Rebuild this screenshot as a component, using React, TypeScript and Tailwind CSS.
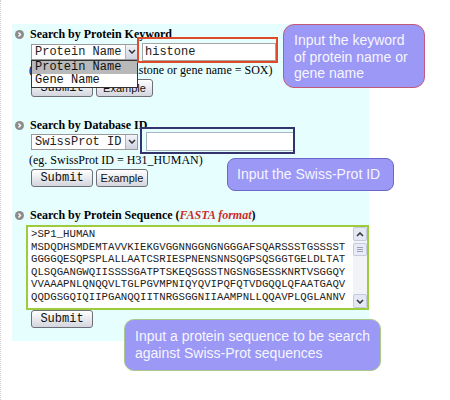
const serif = { fontFamily: '"Liberation Serif", "Times New Roman", serif' };
const mono = { fontFamily: '"Liberation Mono", "Courier New", monospace' };
const sans = { fontFamily: '"Liberation Sans", Arial, sans-serif' };

const sequence = [
  '>SP1_HUMAN',
  'MSDQDHSMDEMTAVVKIEKGVGGNNGGNGNGGGAFSQARSSSTGSSSST',
  'GGGGQESQPSPLALLAATCSRIESPNENSNNSQGPSQSGGTGELDLTAT',
  'QLSQGANGWQIISSSSGATPTSKEQSGSSTNGSNGSESSKNRTVSGGQY',
  'VVAAAPNLQNQQVLTGLPGVMPNIQYQVIPQFQTVDGQQLQFAATGAQV',
  'QQDGSGQIQIIPGANQQIITNRGSGGNIIAAMPNLLQQAVPLQGLANNV',
];

const Bullet = () => (
  <svg width="9" height="9" viewBox="0 0 9 9" className="shrink-0">
    <circle cx="4.5" cy="4.5" r="4.5" fill="#8c8c8c" />
    <path d="M3.5 2.5 L5.5 4.5 L3.5 6.5" stroke="#fff" strokeWidth="1.4" fill="none" />
  </svg>
);

const Chevron = ({ up = false }: { up?: boolean }) => (
  <svg width="8" height="5" viewBox="0 0 8 5">
    <path d={up ? 'M1 4 L4 1 L7 4' : 'M1 1 L4 4 L7 1'} stroke="#333" strokeWidth="1.5" fill="none" />
  </svg>
);

const Select = ({ label }: { label: string }) => (
  <div className="flex h-[16px] w-[107px] items-stretch border border-[#9a9a9a] bg-white">
    <div className="flex-1 pl-[3px] text-[12px] leading-[14px] text-[#222]" style={mono}>
      {label}
    </div>
    <div className="flex w-[12px] items-center justify-center border-l border-[#b0b0c0] bg-gradient-to-b from-[#f4f4fa] to-[#cfd3e0]">
      <Chevron />
    </div>
  </div>
);

const Button = ({ label, code = false, w }: { label: string; code?: boolean; w: string }) => (
  <div
    className={`flex h-[18px] ${w} items-center justify-center rounded-[3px] border border-[#6f6f7a] bg-gradient-to-b from-white to-[#d4d6de] text-[12px] text-[#111]`}
    style={code ? mono : { ...sans, fontSize: 11 }}
  >
    {label}
  </div>
);

const Title = ({ children }: { children: React.ReactNode }) => (
  <div className="flex items-center gap-[6px] pl-[3px]">
    <Bullet />
    <div className="text-[12px] font-bold leading-[14px] text-black" style={serif}>
      {children}
    </div>
  </div>
);

export default function App() {
  return (
    <div className="relative h-[400px] w-[450px] overflow-hidden border-l border-dotted border-[#d0d0d0] bg-white">
      <div className="ml-[11px] mt-[24px] flex h-[317px] w-[357px] flex-col bg-[#e7feff] pt-[3px]">
        {/* keyword */}
        <Title>Search by Protein Keyword</Title>
        <div className="mt-[1px] flex h-[19px] items-center gap-[4px] pl-[19px]">
          <Select label="Protein Name" />
          <div className="h-[18px] w-[134px] border border-[#a5a5a5] bg-white pl-[2px] text-[12px] leading-[16px] text-[#222]" style={mono}>
            histone
          </div>
        </div>
        <div className="mt-[2px] pl-[17px] text-[12px] leading-[14px] text-black" style={serif}>
          (eg. Protein Name = histone or gene name = SOX)
        </div>
        <div className="mt-[2px] flex gap-[3px] pl-[19px]">
          <Button label="Submit" code w="w-[62px]" />
          <Button label="Example" w="w-[57px]" />
        </div>

        {/* database id */}
        <div className="mt-[21px]">
          <Title>Search by Database ID</Title>
        </div>
        <div className="mt-[0px] flex h-[19px] items-center gap-[8px] pl-[19px]">
          <Select label="SwissProt ID" />
          <div className="h-[19px] w-[148px] border border-[#a8b4c0] bg-white" />
        </div>
        <div className="mt-[2px] pl-[17px] text-[12px] leading-[14px] text-black" style={serif}>
          (eg. SwissProt ID = H31_HUMAN)
        </div>
        <div className="mt-[2px] flex gap-[3px] pl-[19px]">
          <Button label="Submit" code w="w-[62px]" />
          <Button label="Example" w="w-[52px]" />
        </div>

        {/* sequence */}
        <div className="mt-[21px]">
          <Title>
            Search by Protein Sequence (<span className="font-bold italic text-[#cc2a2a]">FASTA format</span>)
          </Title>
        </div>
        <div className="ml-[14px] mt-[3px] flex h-[85px] w-[343px] border-2 border-[#9ccc3c] bg-white">
          <div className="flex-1 pl-[3px] pt-[1px] text-[10.7px] leading-[12.6px] text-[#222]" style={mono}>
            {sequence.map((l) => (
              <div key={l} className="whitespace-pre">
                {l}
              </div>
            ))}
          </div>
          <div className="flex w-[14px] flex-col bg-[#f2f3f7]">
            <div className="flex h-[14px] items-center justify-center rounded-[2px] border border-[#c4cbe0] bg-[#e4e8f4]">
              <Chevron up />
            </div>
            <div className="mt-[2px] flex h-[13px] flex-col items-center justify-center gap-[1px] rounded-[2px] border border-[#c4cbe0] bg-[#e8ebf5]">
              <div className="h-px w-[6px] bg-[#9aa2b8]" />
              <div className="h-px w-[6px] bg-[#9aa2b8]" />
              <div className="h-px w-[6px] bg-[#9aa2b8]" />
            </div>
            <div className="flex-1" />
            <div className="flex h-[14px] items-center justify-center rounded-[2px] border border-[#c4cbe0] bg-[#e4e8f4]">
              <Chevron />
            </div>
          </div>
        </div>
        <div className="flex pl-[19px]">
          <Button label="Submit" code w="w-[62px]" />
        </div>
      </div>

      {/* dropdown list */}
      <div className="absolute left-[30px] top-[60px] w-[107px] border border-[#333] bg-white text-[12px] leading-[13px] text-[#111]" style={mono}>
        <div className="bg-[#b9b9b9] pl-[3px]">Protein Name</div>
        <div className="pl-[3px]">Gene Name</div>
      </div>

      {/* highlight boxes */}
      <div className="absolute left-[136px] top-[37px] h-[26px] w-[141px] border-2 border-[#e04a26]" />
      <div className="absolute left-[139px] top-[127px] h-[27px] w-[155px] border-2 border-[#33336e]" />

      {/* callouts */}
      <div
        className="absolute left-[282px] top-[24px] h-[64px] w-[142px] rounded-[11px] border border-[#c45a78] bg-[#9b98f6] pl-[10px] pt-[7px] text-[14px] leading-[16.5px] text-[#f6f6ff]"
        style={sans}
      >
        Input the keyword
        <br />
        of protein name or
        <br />
        gene name
      </div>
      <div
        className="absolute left-[226px] top-[158px] flex h-[33px] w-[167px] items-center rounded-[8px] border border-[#6a68c8] bg-[#9b98f6] pl-[9px] text-[14px] text-[#f6f6ff]"
        style={sans}
      >
        Input the Swiss-Prot ID
      </div>
      <div
        className="absolute left-[123px] top-[319px] h-[52px] w-[257px] rounded-[10px] border border-[#a9c98c] bg-[#9b98f6] pl-[10px] pt-[8px] text-[14px] leading-[16.5px] text-[#f6f6ff]"
        style={sans}
      >
        Input a protein sequence to be search
        <br />
        against Swiss-Prot sequences
      </div>
    </div>
  );
}
